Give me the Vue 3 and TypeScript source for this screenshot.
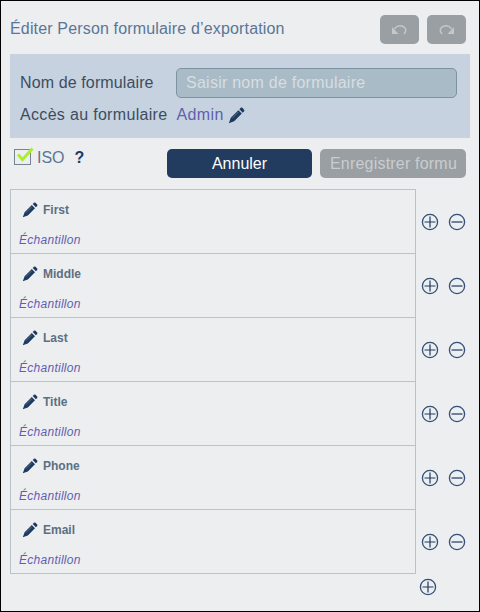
<script setup lang="ts">
const rows: string[] = ['First', 'Middle', 'Last', 'Title', 'Phone', 'Email']
</script>

<template>
  <div class="frame">
    <header class="head">
      <h1 class="title">Éditer Person formulaire d’exportation</h1>
      <div class="history">
        <button class="hist" type="button" aria-label="Annuler">
          <svg width="17" height="13" viewBox="0 0 17 13"><path d="M3.5 6 C5 3 8.5 2.2 11.5 3.2 C15 4.5 16 8 13 11" fill="none" stroke="#c4c8cb" stroke-width="1.5"/><path d="M1 4 L1 11 L7.5 11 Z" fill="#c4c8cb"/></svg>
        </button>
        <button class="hist" type="button" aria-label="Rétablir">
          <svg width="17" height="13" viewBox="0 0 17 13"><path d="M13.5 6 C12 3 8.5 2.2 5.5 3.2 C2 4.5 1 8 4 11" fill="none" stroke="#c4c8cb" stroke-width="1.5"/><path d="M16 4 L16 11 L9.5 11 Z" fill="#c4c8cb"/></svg>
        </button>
      </div>
    </header>

    <section class="panel">
      <div class="name-row">
        <label class="label name-label">Nom de formulaire</label>
        <input class="name-input" type="text" placeholder="Saisir nom de formulaire" />
      </div>
      <div class="access-row">
        <span class="label access-label">Accès au formulaire</span>
        <a class="admin">Admin</a>
        <svg class="pen" width="17" height="17" viewBox="0 0 16 16"><path d="M12 .8 C12.6 .4 13.2 .5 13.7 1 L15 2.3 C15.5 2.8 15.6 3.4 15.2 4 L13.9 5.3 L10.7 2.1 Z M9.8 3 L13 6.2 L5.8 13.4 L.8 15.2 L2.6 10.2 Z" fill="#1f3a5f"/><path d="M4 10.6 L10 4.6" stroke="#8fa0b4" stroke-width=".5"/></svg>
      </div>
    </section>

    <div class="actions">
      <div class="iso">
        <span class="check">
          <svg class="tick" width="21" height="17" viewBox="0 0 21 17"><path d="M4 7.5 L8.5 12.5 L18.5 1.5" fill="none" stroke="#a8f02c" stroke-width="3"/></svg>
        </span>
        <span class="iso-text">ISO</span>
        <span class="help">?</span>
      </div>
      <div class="buttons">
        <button class="btn cancel" type="button">Annuler</button>
        <button class="btn save" type="button"><span class="save-text">Enregistrer formulaire</span></button>
      </div>
    </div>

    <div class="body">
      <div class="table">
        <div v-for="row in rows" :key="row" class="row">
          <div class="row-name">
            <svg class="row-pen" width="16" height="16" viewBox="0 0 16 16"><path d="M12 .8 C12.6 .4 13.2 .5 13.7 1 L15 2.3 C15.5 2.8 15.6 3.4 15.2 4 L13.9 5.3 L10.7 2.1 Z M9.8 3 L13 6.2 L5.8 13.4 L.8 15.2 L2.6 10.2 Z" fill="#1f3a5f"/><path d="M4 10.6 L10 4.6" stroke="#8fa0b4" stroke-width=".5"/></svg>
            <span class="field">{{ row }}</span>
          </div>
          <div class="sample">Échantillon</div>
        </div>
      </div>
      <div class="controls">
        <div v-for="row in rows" :key="row" class="control-row">
          <svg class="round" width="18" height="18" viewBox="0 0 18 18"><circle cx="9" cy="9" r="7.6" fill="none" stroke="#2f4f78" stroke-width="1.3"/><path d="M3.5 9 H14.5 M9 3.5 V14.5" stroke="#1f3a5f" stroke-width="1.2"/></svg>
          <svg class="round" width="18" height="18" viewBox="0 0 18 18"><circle cx="9" cy="9" r="7.6" fill="none" stroke="#2f4f78" stroke-width="1.3"/><path d="M3.5 9 H14.5" stroke="#1f3a5f" stroke-width="1.2"/></svg>
        </div>
      </div>
    </div>

    <div class="foot">
      <svg width="18" height="18" viewBox="0 0 18 18"><circle cx="9" cy="9" r="7.6" fill="none" stroke="#2f4f78" stroke-width="1.3"/><path d="M3.5 9 H14.5 M9 3.5 V14.5" stroke="#1f3a5f" stroke-width="1.2"/></svg>
    </div>
  </div>
</template>

<style>
html, body { margin: 0; padding: 0; }
</style>

<style scoped>
.frame {
  box-sizing: border-box;
  width: 480px;
  height: 612px;
  border: 1px solid #000;
  background: #eceef0;
  font-family: "Liberation Sans", Arial, sans-serif;
  padding: 13px 13px 0 9px;
  overflow: hidden;
}
.head {
  display: flex;
  justify-content: space-between;
  align-items: center;
  height: 30px;
}
.title {
  margin: 0;
  font-size: 16px;
  font-weight: 400;
  letter-spacing: 0.16px;
  color: #5a7696;
}
.history { display: flex; gap: 8px; }
.hist {
  width: 39px;
  height: 29px;
  padding: 0;
  border: 0;
  border-radius: 5px;
  background: #9a9fa3;
  display: flex;
  align-items: center;
  justify-content: center;
}
.panel {
  box-sizing: border-box;
  width: 460px;
  margin-right: -4px;
  height: 84px;
  margin-top: 10px;
  padding: 14px 13px 0 10px;
  background: #c6d2df;
}
.name-row { display: flex; align-items: center; height: 30px; }
.label { font-size: 16px; color: #3d4d60; }
.name-label { width: 156px; flex: none; letter-spacing: 0.12px; }
.access-label { letter-spacing: 0.32px; }
.name-input {
  box-sizing: border-box;
  width: 281px;
  height: 30px;
  padding: 0 9px;
  border: 1px solid #7f929f;
  border-radius: 5px;
  background: #a9bbc6;
  font: 16px "Liberation Sans", Arial, sans-serif;
  letter-spacing: 0.25px;
  outline: none;
}
.name-input::placeholder { color: #d7dee2; opacity: 1; }
.access-row { display: flex; align-items: center; height: 20px; margin-top: 7px; }
.admin { margin-left: 9px; font-size: 16px; letter-spacing: 0.4px; color: #5f5fb0; }
.pen { margin-left: 4px; }
.actions {
  display: flex;
  justify-content: space-between;
  height: 29px;
  margin-top: 11px;
}
.iso { position: relative; display: flex; align-items: flex-start; padding-left: 4px; }
.check {
  box-sizing: border-box;
  width: 17px;
  height: 16px;
  border: 1px solid #76858f;
  position: relative;
}
.tick { position: absolute; left: -1px; top: -3px; }
.iso-text { margin-left: 6px; font-size: 16px; line-height: 18px; color: #5a7696; }
.help { margin-left: 10px; font-size: 16px; line-height: 18px; font-weight: 700; color: #1f3a5f; }
.buttons { display: flex; gap: 8px; }
.btn {
  box-sizing: border-box;
  height: 29px;
  border: 0;
  border-radius: 5px;
  font: 16px "Liberation Sans", Arial, sans-serif;
  padding: 0;
}
.cancel { width: 145px; background: #223c60; color: #fff; }
.save {
  width: 146px;
  background: #9a9fa3;
  color: #c9cdd0;
  padding: 0 9px 0 10px;
  text-align: left;
  letter-spacing: 0.2px;
}
.save-text { display: block; overflow: hidden; white-space: nowrap; }
.body { display: flex; margin-top: 11px; }
.table {
  box-sizing: border-box;
  width: 406px;
  border: 1px solid #b9c3cb;
  border-bottom: 0;
  flex: none;
}
.row {
  box-sizing: border-box;
  height: 64px;
  border-bottom: 1px solid #b9c3cb;
  padding: 12px 8px 0;
}
.row-name { display: flex; align-items: center; height: 16px; padding-left: 3px; }
.row-pen { flex: none; }
.field { margin-left: 5px; font-size: 12px; font-weight: 700; color: #5d6f82; }
.sample {
  margin-top: 15px;
  font-size: 12px;
  font-style: italic;
  letter-spacing: 0.27px;
  color: #5f5fb0;
}
.controls { flex: none; }
.control-row {
  display: flex;
  gap: 9px;
  height: 64px;
  padding: 24px 0 0 5px;
  box-sizing: border-box;
}
.round { display: block; }
.foot { padding: 4px 0 0 409px; }
.foot svg { display: block; }
</style>
